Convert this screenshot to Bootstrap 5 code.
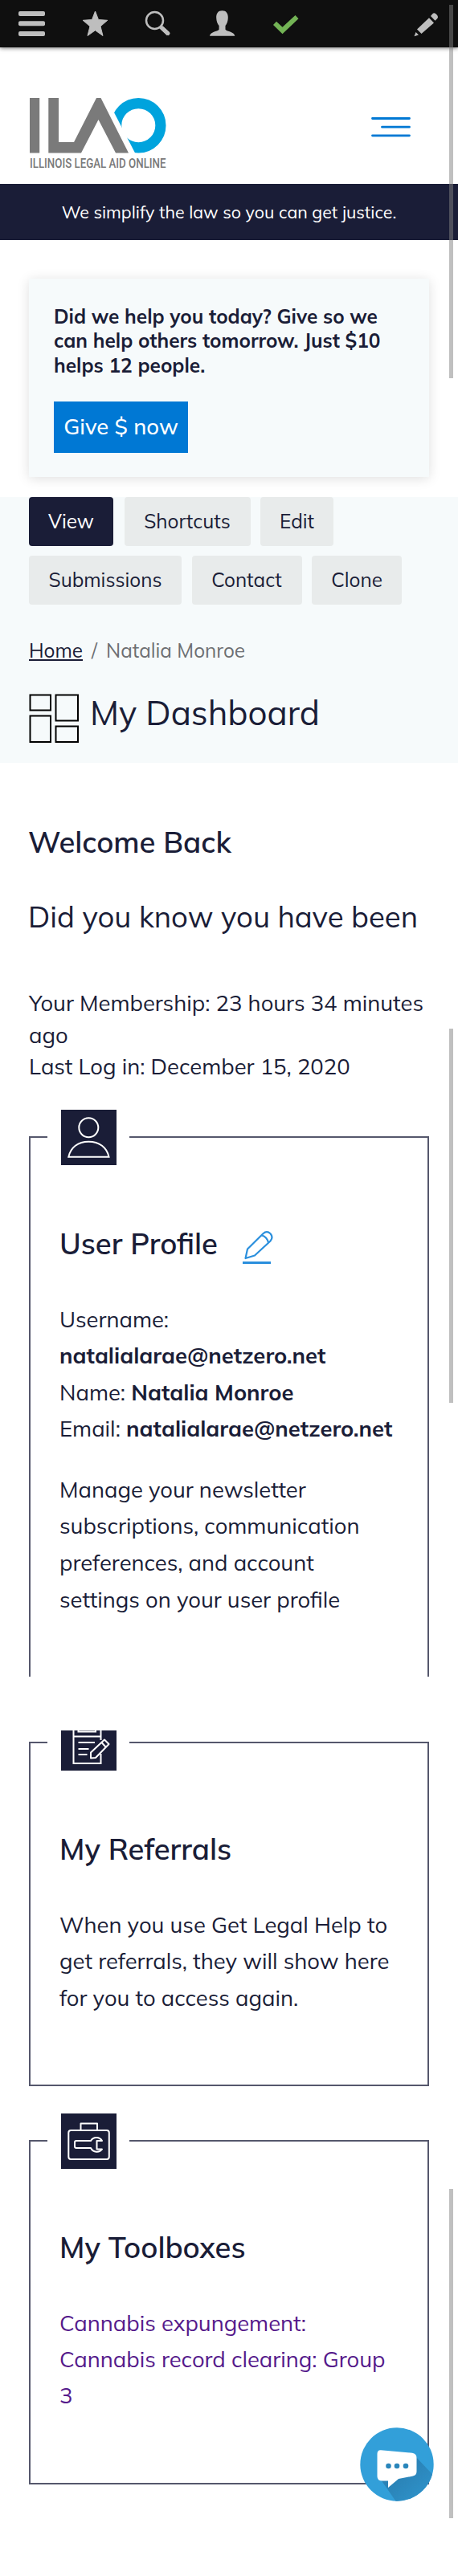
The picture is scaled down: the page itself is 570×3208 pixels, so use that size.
<!DOCTYPE html>
<html lang="en">
<head>
<meta charset="utf-8">
<meta name="viewport" content="width=device-width, initial-scale=1">
<title>My Dashboard | Illinois Legal Aid Online</title>
<link href="https://cdn.jsdelivr.net/npm/bootstrap@5.3.0/dist/css/bootstrap.min.css" rel="stylesheet">
<style>
:root{--navy:#1a1d37;--blue:#0078d4;--mist:#f6fafb}
body{font-family:Mulish,Muli,Lato,sans-serif;color:var(--navy);background:#fff;font-size:27.4px;line-height:45.6px;overflow-x:hidden;height:3208px}
h1,h2,h3,p{margin:0}
.admin-bar{height:59px;background:#0f0f0f;box-shadow:0 1px 5px rgba(0,0,0,.55)}
.admin-bar a{width:79px;height:59px;display:flex}
.site-head{height:170px;padding:0 59px 0 36px}
.site-head .logo{margin-top:61px}
.site-head .logo svg{overflow:visible}
.site-head .menu{margin-top:84px}
.tagline{height:70px;background:var(--navy);font-size:21.4px;line-height:70px}
.donate{margin:48px 36px 0;height:247px;padding:32px 20px 0 31px;background:var(--mist);box-shadow:0 2px 14px rgba(0,0,0,.13)}
.donate p{font-size:24.4px;font-weight:700;line-height:30.3px}
.give{display:block;width:167px;height:64px;margin-top:30px;background:var(--blue);color:#fff;font-size:27.4px;font-weight:500;line-height:61px;padding:0;border:0;border-radius:0}
.top-zone{margin-top:25px;height:331px;background:var(--mist);padding:0 36px;font-size:24.3px}
.tabs{gap:12px 12.5px}
.tabs .nav-link{height:61px;line-height:61px;padding:0;text-align:center;border-radius:4px;background:#e8ebeb;color:var(--navy)}
.tabs .nav-link.active{background:var(--navy);color:#fff}
.w-view{width:105px}.w-short{width:157px}.w-edit{width:91px}.w-sub{width:190px}.w-contact{width:137px}.w-clone{width:112px}
.tabs .w-view{margin-right:1px}
.crumbs{margin:39px 0 0;line-height:36px}
.crumbs a{color:var(--navy)}
.crumbs .sep,.crumbs .here{color:#6d6f72}
.crumbs .sep{padding:0 11px}
.dash{margin-top:36px}
.dash h1{font-size:42px;font-weight:400;line-height:48px;margin-left:14px}
.welcome{padding:76px 15px 0 35px}
.welcome h2,.tile h2{font-size:36.4px;font-weight:600;line-height:44px}
.welcome .did{margin-top:49px;font-size:36.5px;line-height:44px}
.welcome .facts{margin-top:66px;line-height:39.5px;margin-left:1px}
.tile{position:relative;margin:67px 36px 0;border:2px solid #55576c;padding:109px 12px 0 36px}
.tile h2+p,.tile .d-flex+p{margin-top:50px}
.tile .d-flex{height:44px}
.tile.profile{height:673px;margin-top:67px;border-bottom:0}
.tile.std{height:429px}
.tile .more{margin-top:30px}
.pencil{margin:7px 0 0 31px}
.clip{overflow:hidden;padding-top:14px;margin-top:67px}
.clip .tile{margin-top:0}
.seal{position:absolute;left:21px;top:-35px;width:102px;padding-left:17px;background:#fff;line-height:0}
.tools a{color:#551a8b;text-decoration:none}
.tools p{line-height:45.2px}
.chat{position:absolute;left:448px;top:3023px}
.thumb{position:absolute;left:559px;width:5px;background:rgba(130,130,130,.5)}
.t1{top:6px;height:465px}.t2{top:1281px;height:466px}.t3{top:2726px;height:410px}
</style>
</head>
<body class="position-relative">
<nav class="admin-bar d-flex position-relative">
  <a href="#" aria-label="Menu"><svg width="79" height="59" fill="#bebebe"><rect x="23" y="14" width="33" height="6" rx="2"/><rect x="23" y="26.300" width="33" height="6" rx="2"/><rect x="23" y="39" width="33" height="6" rx="2"/></svg></a>
  <a href="#" aria-label="Shortcuts"><svg width="79" height="59" fill="#bebebe"><path stroke="#bebebe" stroke-linejoin="round" d="M39.500 14l4 10.500 11.300.8-8.800 7.500 3 11.700-9.500-6.700-9.500 6.700 3-11.700-8.800-7.500 11.300-.8z"/></svg></a>
  <a href="#" aria-label="Search"><svg width="79" height="59" fill="none" stroke="#bebebe"><circle cx="34.500" cy="25.500" r="10.500" stroke-width="2.500"/><path d="M42 33.500l9.500 9" stroke-width="5" stroke-linecap="butt"/><path d="M44.500 35.500l6.500 6" stroke-width="5" stroke-linecap="round"/></svg></a>
  <a href="#" aria-label="Account"><svg width="79" height="59" fill="#bebebe"><path d="M39.500 13.300c5 0 7.500 3.400 7.300 9-.1 4.500-1.500 7.500-3.300 9.800v4.600c2 2.600 11.500 3 11.800 8.100H24c.3-5.100 9.500-5.500 11.600-8.100v-4.600c-1.800-2.300-3.300-5.300-3.400-9.800-.2-5.600 2.300-9 7.300-9z"/></svg></a>
  <a href="#" aria-label="Status"><svg width="79" height="59" fill="#73b355"><path d="M24 31l4-4.300 7.500 7L51.500 19l4 4.300-20 19z"/></svg></a>
  <a href="#" aria-label="Edit" class="ms-auto"><svg width="79" height="59" fill="#bebebe"><path d="M43 22.300l6 6.200L33.500 42l-5.500-5.500zM45 20l2.300-2.800q2.200-2.200 5 .8 3 3.200.8 5.200l-2.600 2.500zM26.500 40l3.500 3.400-5.500 1.800z"/></svg></a>
</nav>

<header class="site-head d-flex justify-content-between align-items-start">
  <a class="logo" href="#" aria-label="Illinois Legal Aid Online">
    <svg class="d-block" width="174" height="96" viewBox="36 120 174 96">
      <circle cx="172.300" cy="156.200" r="27.600" fill="none" stroke="#00a3dd" stroke-width="13.200"/>
      <path fill="#fff" d="M120 120h11.600l37.500 72.500H120z"/>
      <g fill="#7a7a7a"><path d="M37 122h12.200v68.500H37z"/><path d="M60.300 122H73v55h19l28-55h5.500L160 190.500h-16L122.500 149 101 190.500H60.300z"/>
      <text x="37" y="209" font-family="Roboto, sans-serif" font-weight="500" font-size="16.500" textLength="169.500" lengthAdjust="spacingAndGlyphs">ILLINOIS LEGAL AID ONLINE</text></g>
    </svg>
  </a>
  <svg class="menu" width="49" height="30" stroke="#0078d4" stroke-width="2.800" stroke-linecap="round"><path d="M1.500 4.500h46M13.500 15.200h34M1.500 25.800h46"/></svg>
</header>

<div class="tagline text-white text-center">We simplify the law so you can get justice.</div>

<section class="donate">
  <p>Did we help you today? Give so we<br>can help others tomorrow. Just $10<br>helps 12 people.</p>
  <a class="btn give" href="#">Give $ now</a>
</section>

<section class="top-zone">
  <nav class="nav tabs">
    <a class="nav-link active w-view" href="#">View</a>
    <a class="nav-link w-short" href="#">Shortcuts</a>
    <a class="nav-link w-edit" href="#">Edit</a>
    <a class="nav-link w-sub" href="#">Submissions</a>
    <a class="nav-link w-contact" href="#">Contact</a>
    <a class="nav-link w-clone" href="#">Clone</a>
  </nav>
  <div class="crumbs d-flex">
    <a href="#">Home</a><span class="sep">/</span><span class="here">Natalia Monroe</span>
  </div>
  <div class="dash d-flex align-items-start">
    <svg width="62" height="62" fill="none" stroke="#000" stroke-width="2"><path d="M1.500 1.500H27v19H1.500zM33.500 1.500H61v32H33.500zM1.500 27.500H27V60H1.500zM33.500 40.500H61V60H33.500z"/></svg>
    <h1>My Dashboard</h1>
  </div>
</section>

<section class="welcome">
  <h2>Welcome Back</h2>
  <p class="did">Did you know you have been</p>
  <p class="facts">Your Membership: 23 hours 34 minutes<br>ago<br>Last Log in: December 15, 2020</p>
</section>

<section class="tile profile">
  <span class="seal"><svg width="69" height="69"><path fill="#1a1d37" d="M0 0h69v69H0z"/><g fill="none" stroke="#fff" stroke-width="2"><circle cx="34.300" cy="22.300" r="12"/><path d="M9.300 58.700C12 47 21 39.700 34.300 39.700S57 47 59.500 58.700z"/></g></svg></span>
  <div class="d-flex align-items-start">
    <h2>User Profile</h2>
    <svg class="pencil" width="38" height="42" fill="none" stroke="#2a8fdd" stroke-width="2.200" stroke-linejoin="round"><path d="M3.500 34L6 22.500 25.500 3.200q4.500-4 9 0 4 4.500 0 9.300L15 30.500zM24 5.500q6 1.500 8 9"/><path d="M0 39.500h35" stroke-width="3"/></svg>
  </div>
  <p>Username:<br><strong>natalialarae@netzero.net</strong><br>Name: <strong>Natalia Monroe</strong><br>Email: <strong>natalialarae@netzero.net</strong></p>
  <p class="more">Manage your newsletter<br>subscriptions, communication<br>preferences, and account<br>settings on your user profile</p>
</section>

<div class="clip">
  <section class="tile std">
    <span class="seal"><svg width="69" height="69"><path fill="#1a1d37" d="M0 0h69v69H0z"/><g fill="none" stroke="#fff" stroke-width="2"><path d="M49.500 48v12h-34V12h34v19M15.500 26.500h34M21.500 12v8.500h21.500V12M21.500 34h20.500M21.500 42h13M21.500 49h11"/><path fill="#1a1d37" stroke-linejoin="round" d="M37 46.500L54 30.500l5.500 5.500L43 53l-6 .5zM50.500 34l5 5.500"/></g></svg></span>
    <h2>My Referrals</h2>
    <p>When you use Get Legal Help to<br>get referrals, they will show here<br>for you to access again.</p>
  </section>
</div>

<section class="tile std tools">
  <span class="seal"><svg width="69" height="69"><path fill="#1a1d37" d="M0 0h69v69H0z"/><g fill="none" stroke="#fff" stroke-width="2" stroke-linejoin="round"><rect x="9.300" y="21" width="50.500" height="36" rx="3"/><path d="M24.500 21v-8.500H45V21"/><path d="M37 34H19q-2 0-2 2v5q0 2 2 2h18c3 6 11 6 14 1.500h-6.500V34H51c-3-5.500-11-5.500-14 0z"/></g></svg></span>
  <h2>My Toolboxes</h2>
  <p><a href="#">Cannabis expungement:<br>Cannabis record clearing: Group<br>3</a></p>
</section>

<a class="chat" href="#" aria-label="Chat">
  <svg class="d-block" width="92" height="92">
    <defs><clipPath id="disc"><circle cx="46" cy="46" r="45.700"/></clipPath><linearGradient id="shade" x1="0" y1="0" x2="1" y2="1"><stop offset=".3" stop-color="#2a82b6"/><stop offset="1" stop-color="#329fd9"/></linearGradient></defs>
    <g clip-path="url(#disc)"><path fill="#329fd9" d="M0 0h92v92H0z"/><path fill="url(#shade)" d="M68 35l40 42-30 30H55L26 65z"/></g>
    <path fill="#fff" d="M26 28.300l39 3.500q5.500 1 5.500 6V55q0 5-5.500 5.700L48 64 35 75v-8.500h-7q-6.500 0-6.500-5.500V33q0-5 4.500-4.700z"/>
    <g fill="#2a86bb"><circle cx="35.500" cy="48" r="3.300"/><circle cx="46" cy="48" r="3.300"/><circle cx="57" cy="48" r="3.300"/></g>
  </svg>
</a>
<div class="thumb t1"></div><div class="thumb t2"></div><div class="thumb t3"></div>
<script src="https://cdn.jsdelivr.net/npm/bootstrap@5.3.0/dist/js/bootstrap.bundle.min.js"></script>
</body>
</html>
